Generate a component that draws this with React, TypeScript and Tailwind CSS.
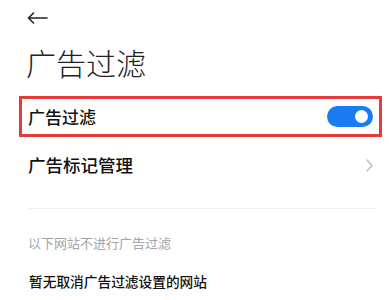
import React from "react";

const font = { fontFamily: '"Noto Sans CJK SC", "Noto Sans", sans-serif' };

function Toggle() {
    return (
        <div className="relative w-[46px] h-[21px] rounded-full bg-[#1a7cf2]">
            <div className="absolute right-[5px] top-[4px] w-[13px] h-[13px] rounded-full bg-white" />
        </div>
    );
}

export default function App() {
    return (
        <div className="w-[389px] h-[300px] bg-white overflow-hidden text-[#111]" style={font}>
            {/* Back */}
            <div className="h-[36px] pl-[27px] pt-[12px]">
                <svg width="21" height="12" viewBox="0 0 21 12" fill="none" stroke="#222" strokeWidth="1.6" strokeLinecap="round" strokeLinejoin="round">
                    <path d="M20 6H1.5M6.5 1L1.5 6l5 5" />
                </svg>
            </div>

            {/* Title */}
            <h1 className="pl-[26px] mt-[11px] text-[30px] leading-[30px] font-light text-[#222]">广告过滤</h1>

            {/* Highlighted row */}
            <div className="ml-[19px] mt-[19px] w-[363px] h-[41px] border-[3px] border-[#e53b3b] flex items-center justify-between pl-[6px] pr-[6px]">
                <span className="text-[17px] leading-[20px] font-medium">广告过滤</span>
                <Toggle />
            </div>

            {/* Ad marks */}
            <div className="h-[56px] flex items-center justify-between pl-[28px] pr-[16px]">
                <span className="text-[17.5px] leading-[20px] font-medium">广告标记管理</span>
                <svg width="7" height="13" viewBox="0 0 7 13" fill="none" stroke="#b8b8b8" strokeWidth="1.2" strokeLinecap="round" strokeLinejoin="round">
                    <path d="M1 1l5 5.5L1 12" />
                </svg>
            </div>

            {/* Divider */}
            <div className="mt-[15px] ml-[28px] mr-[12px] h-px bg-[#f0f0f0]" />

            <p className="mt-[24px] pl-[28px] text-[13px] leading-[20px] text-[#a3a3ab]">以下网站不进行广告过滤</p>

            <p className="mt-[18px] pl-[29px] text-[13.7px] leading-[20px] font-medium text-[#111]">暂无取消广告过滤设置的网站</p>
        </div>
    );
}
